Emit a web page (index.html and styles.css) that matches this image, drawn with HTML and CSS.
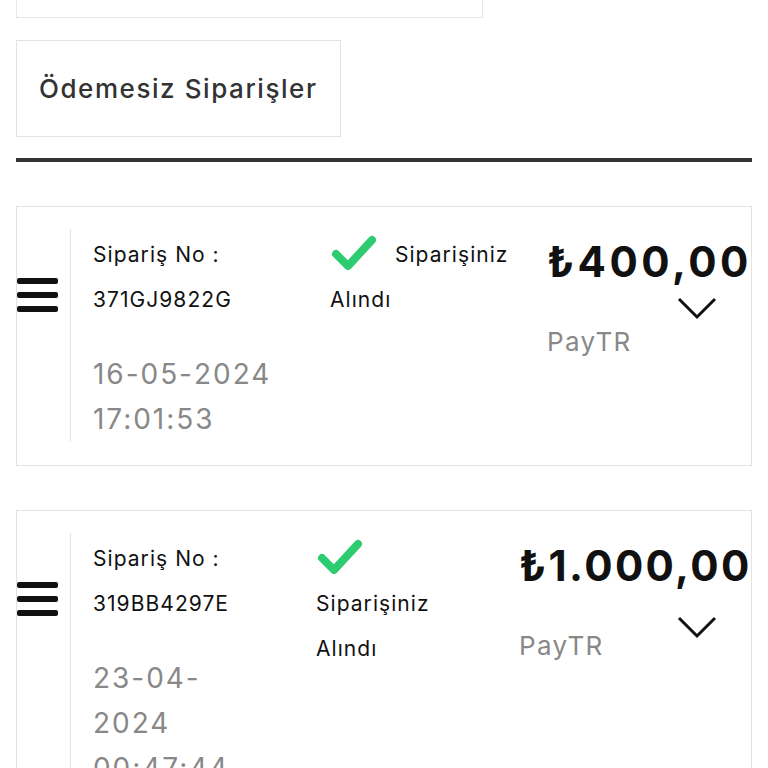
FILE: index.html
```html
<!DOCTYPE html>
<html lang="tr">
<head>
    <meta charset="UTF-8">
    <meta name="viewport" content="width=device-width, initial-scale=1.0">
    <title>Siparişlerim</title>
    <link rel="stylesheet" href="styles.css">
</head>
<body>

    <div class="page">
        <div class="search-box"></div>

        <div class="tab-button">Ödemesiz Siparişler</div>

        <hr class="divider">

        <div class="order-card">
            <div class="order-row">
                <div class="menu-icon">
                    <svg width="41" height="34" viewBox="0 0 41 34">
                        <rect x="0" y="0" width="41" height="6" rx="2"/>
                        <rect x="0" y="14" width="41" height="6" rx="2"/>
                        <rect x="0" y="28" width="41" height="6" rx="2"/>
                    </svg>
                </div>
                <div class="order-info">
                    <p>Sipariş No :</p>
                    <p>371GJ9822G</p>
                    <p class="order-date">16-05-<wbr>2024 17:01:53</p>
                </div>
                <div class="order-status">
                    <svg class="check" width="48" height="36" viewBox="0 0 48 36">
                        <path d="M6 19 L18 31 L42 5"/>
                    </svg>
                    Siparişiniz Alındı
                </div>
                <div class="order-price">
                    <div class="price">₺400,00</div>
                    <svg class="toggle" width="40" height="24" viewBox="0 0 40 24">
                        <path d="M2 3 L20 21 L38 3"/>
                    </svg>
                    <div class="method">PayTR</div>
                </div>
            </div>
        </div>

        <div class="order-card order-card--wide">
            <div class="order-row">
                <div class="menu-icon">
                    <svg width="41" height="34" viewBox="0 0 41 34">
                        <rect x="0" y="0" width="41" height="6" rx="2"/>
                        <rect x="0" y="14" width="41" height="6" rx="2"/>
                        <rect x="0" y="28" width="41" height="6" rx="2"/>
                    </svg>
                </div>
                <div class="order-info">
                    <p>Sipariş No :</p>
                    <p>319BB4297E</p>
                    <p class="order-date">23-04-<wbr>2024 00:47:44</p>
                </div>
                <div class="order-status">
                    <svg class="check" width="48" height="36" viewBox="0 0 48 36">
                        <path d="M6 19 L18 31 L42 5"/>
                    </svg>
                    Siparişiniz Alındı
                </div>
                <div class="order-price">
                    <div class="price">₺1.000,00</div>
                    <svg class="toggle" width="40" height="24" viewBox="0 0 40 24">
                        <path d="M2 3 L20 21 L38 3"/>
                    </svg>
                    <div class="method">PayTR</div>
                </div>
            </div>
        </div>
    </div>

</body>
</html>
```

FILE: styles.css
```css
body {
    margin: 0;
    font-family: Inter, "Noto Sans", sans-serif;
    color: #111;
    background: #fff;
}

.page {
    padding: 0 16px;
}

.search-box {
    width: 465px;
    height: 17px;
    border: 1px solid #e6e6e6;
    border-top: none;
}

.tab-button {
    display: inline-block;
    margin-top: 22px;
    padding: 0 22px;
    height: 95px;
    line-height: 95px;
    border: 1px solid #e3e3e3;
    font-size: 26px;
    font-weight: 500;
    letter-spacing: 0.06em;
    color: #333;
}

.divider {
    margin: 21px 0 0;
    height: 4px;
    border: none;
    background: #333;
}

.order-card {
    margin-top: 44px;
    padding: 22px 0 23px;
    border: 1px solid #e3e3e3;
}

.order-row {
    display: grid;
    grid-template-columns: 53px 260px 217px minmax(0, 1fr);
    align-items: start;
}

.order-card--wide .order-row {
    grid-template-columns: 53px 246px 203px minmax(0, 1fr);
}

.menu-icon {
    margin-top: 49px;
}

.menu-icon rect {
    fill: #111;
}

.order-info {
    align-self: stretch;
    border-left: 1px solid #e3e3e3;
    padding: 3px 50px 0 22px;
}

.order-info p {
    margin: 0;
    font-size: 21px;
    line-height: 45px;
    letter-spacing: 0.05em;
}

.order-info .order-date {
    margin-top: 30px;
    font-size: 28px;
    letter-spacing: 0.07em;
    color: #888;
}

.order-status {
    padding: 3px 36px 0 0;
    font-size: 21px;
    line-height: 45px;
    letter-spacing: 0.05em;
}

.check {
    margin-right: 10px;
    vertical-align: -9px;
}

.check path {
    fill: none;
    stroke: #2ecc71;
    stroke-width: 8;
    stroke-linecap: round;
    stroke-linejoin: round;
}

.order-price {
    display: flex;
    flex-direction: column;
    padding-top: 3px;
    white-space: nowrap;
}

.price {
    margin-top: 5px;
    font-size: 42px;
    font-weight: 700;
    line-height: 50px;
    letter-spacing: 3.5px;
}

.toggle {
    align-self: flex-end;
    margin: 9px 34px 0 0;
}

.toggle path {
    fill: none;
    stroke: #111;
    stroke-width: 3;
}

.method {
    margin-top: 6px;
    font-size: 26px;
    letter-spacing: 0.05em;
    color: #888;
}

.order-card--wide .price {
    letter-spacing: 2.4px;
}

.order-card--wide .toggle {
    margin-top: 24px;
}

.order-card--wide .method {
    margin-top: -9px;
}
```
